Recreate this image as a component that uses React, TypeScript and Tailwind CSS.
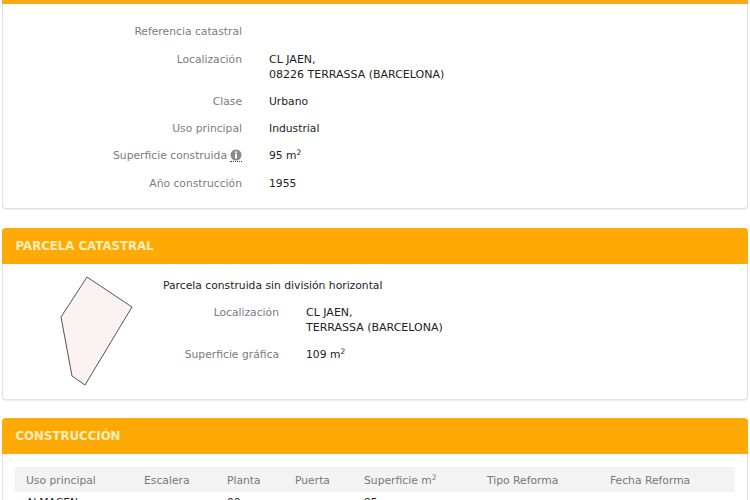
const TABLE_COLS = "grid grid-cols-[118px_83px_68px_69px_123px_123px_1fr] px-[11px]";

function Sup() {
  return <sup className="relative top-[1px] align-super text-[7.5px] leading-none">2</sup>;
}

function Row({
  label,
  children,
  labelWidth = "w-[239px]",
  className = "",
}: {
  label: React.ReactNode;
  children?: React.ReactNode;
  labelWidth?: string;
  className?: string;
}) {
  return (
    <div className={`flex gap-[27px] ${className}`}>
      <div className={`${labelWidth} shrink-0 text-right text-[#7b7b7b]`}>{label}</div>
      <div className="text-[#222]">{children}</div>
    </div>
  );
}

function Panel({ title, children, className = "" }: { title?: string; children: React.ReactNode; className?: string }) {
  return (
    <section className={`mx-[2px] rounded-[4px] border border-t-0 border-[#e2e2e2] bg-white shadow-[0_1px_1px_#eee] ${className}`}>
      {title ? (
        <h2 className="-mx-px flex h-[36px] items-center rounded-t-[4px] bg-[#ffa904] pl-[13.5px] text-[11.75px] font-bold text-[#ffeebb]">
          {title}
        </h2>
      ) : (
        <div className="-mx-px h-[4px] bg-[#fba918]" />
      )}
      {children}
    </section>
  );
}

export default function App() {
  return (
    <div className="h-[500px] overflow-hidden bg-white font-['DejaVu_Sans',Verdana,sans-serif] text-[10.75px] leading-[15px]">
      <Panel className="h-[209px]">
        <div className="flex flex-col gap-[12px] pt-[20px]">
          <Row label="Referencia catastral" />
          <Row label="Localización" className="mt-[1px]">
            <span className="text-[11px]">
              CL JAEN,
              <br />
              08226 TERRASSA (BARCELONA)
            </span>
          </Row>
          <Row label="Clase">Urbano</Row>
          <Row label="Uso principal">Industrial</Row>
          <Row
            label={
              <span className="inline-flex items-center gap-[3px]">
                Superficie construida
                <span className="inline-flex h-[13px] items-center border-b border-dotted border-[#444]">
                  <svg width="12" height="12" viewBox="0 0 12 12">
                    <circle cx="6" cy="6" r="5.5" fill="#8a8a8a" />
                    <rect x="5" y="2.4" width="2" height="1.8" fill="#fff" />
                    <rect x="5" y="5" width="2" height="4.4" fill="#fff" />
                  </svg>
                </span>
              </span>
            }
          >
            95 m<Sup />
          </Row>
          <Row label="Año construcción" className="mt-[1px]">1955</Row>
        </div>
      </Panel>

      <Panel title="PARCELA CATASTRAL" className="mt-[19px] h-[172px]">
        <div className="flex">
          <svg width="158" height="136" viewBox="0 0 158 136" className="shrink-0">
            <polygon
              points="84,13 129,43 82,121 69,112 58,53"
              fill="#fbf3f3"
              stroke="#555"
              strokeWidth="1"
            />
          </svg>
          <div className="pt-[14px] text-[#222]">
            <p className="pl-[2px]">Parcela construida sin división horizontal</p>
            <div className="mt-[12px] flex flex-col gap-[12px]">
              <Row label="Localización" labelWidth="w-[118px]">
                <span className="text-[11px]">
                  CL JAEN,
                  <br />
                  TERRASSA (BARCELONA)
                </span>
              </Row>
              <Row label="Superficie gráfica" labelWidth="w-[118px]">
                109 m<Sup />
              </Row>
            </div>
          </div>
        </div>
      </Panel>

      <Panel title="CONSTRUCCIÓN" className="mt-[18px] h-[200px]">
        <div className="mx-[12px] mt-[13px]">
          <div className={`${TABLE_COLS} h-[25px] items-center bg-[#f3f3f3] pt-[1px] text-[#777]`}>
            <div>Uso principal</div>
            <div>Escalera</div>
            <div>Planta</div>
            <div>Puerta</div>
            <div>
              Superficie m<Sup />
            </div>
            <div>Tipo Reforma</div>
            <div>Fecha Reforma</div>
          </div>
          <div className={`${TABLE_COLS} pt-[3px] text-[#222]`}>
            <div>ALMACEN</div>
            <div />
            <div>00</div>
            <div />
            <div>95</div>
            <div />
            <div />
          </div>
        </div>
      </Panel>
    </div>
  );
}
